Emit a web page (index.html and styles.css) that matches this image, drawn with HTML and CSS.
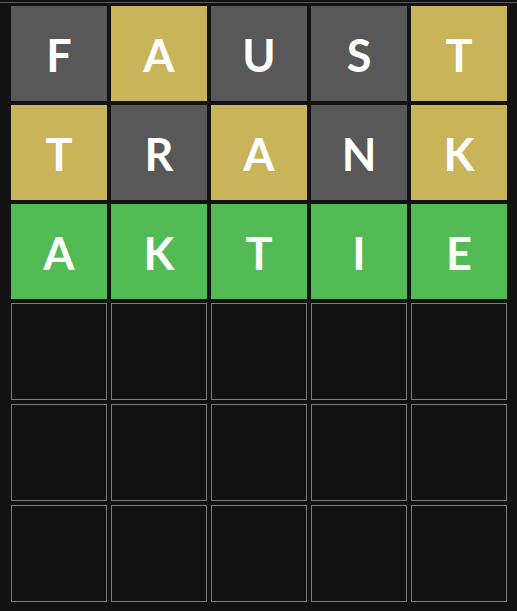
FILE: index.html
```html
<!DOCTYPE html>
<html lang="de">
<head>
<meta charset="utf-8">
<title>Wortspiel</title>
<link rel="stylesheet" href="styles.css">
</head>
<body>
<div class="topbar"></div>
<main class="board">
  <div class="tile absent">F</div>
  <div class="tile present">A</div>
  <div class="tile absent">U</div>
  <div class="tile absent">S</div>
  <div class="tile present">T</div>

  <div class="tile present">T</div>
  <div class="tile absent">R</div>
  <div class="tile present">A</div>
  <div class="tile absent">N</div>
  <div class="tile present">K</div>

  <div class="tile correct">A</div>
  <div class="tile correct">K</div>
  <div class="tile correct">T</div>
  <div class="tile correct">I</div>
  <div class="tile correct">E</div>

  <div class="tile empty"></div>
  <div class="tile empty"></div>
  <div class="tile empty"></div>
  <div class="tile empty"></div>
  <div class="tile empty"></div>

  <div class="tile empty"></div>
  <div class="tile empty"></div>
  <div class="tile empty"></div>
  <div class="tile empty"></div>
  <div class="tile empty"></div>

  <div class="tile empty"></div>
  <div class="tile empty"></div>
  <div class="tile empty"></div>
  <div class="tile empty"></div>
  <div class="tile empty"></div>
</main>
</body>
</html>
```

FILE: styles.css
```css
html, body {
  margin: 0;
  padding: 0;
  background: #121212;
  height: 100%;
  overflow: hidden;
}

.topbar {
  height: 2px;
  border-bottom: 1px solid #5a5a5a;
}

/* guessed rows are flat tiles; open rows keep a 1px outline */
.board {
  display: grid;
  grid-template-columns: repeat(5, 96px);
  grid-template-rows: repeat(3, 95px) repeat(3, 97px);
  gap: 4px;
  padding: 3px 0 0 11px;
}

.tile {
  box-sizing: border-box;
  display: flex;
  align-items: center;
  justify-content: center;
  color: #ffffff;
  font-family: "Lato", "DejaVu Sans", sans-serif;
  font-weight: 700;
  font-size: 45px;
  line-height: 1;
  padding-top: 3px;
}

.absent {
  background: #585858;
}

.present {
  background: #c9b45a;
}

.correct {
  background: #53bb56;
}

.empty {
  border: 1px solid #7c7c7c;
}
```
